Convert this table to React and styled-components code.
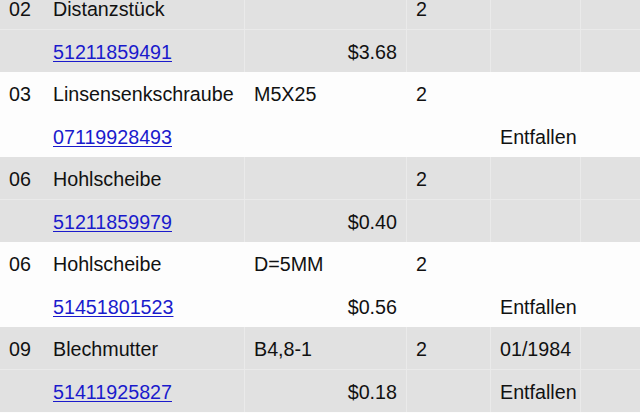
import React from "react";
import styled, { createGlobalStyle } from "styled-components";

const GlobalStyle = createGlobalStyle`
  html, body {
    margin: 0;
    padding: 0;
    background: #fdfdfd;
    overflow: hidden;
  }
  body {
    font-family: "Liberation Sans", Arial, Helvetica, sans-serif;
    color: #111;
  }
`;

const StyledList = styled.div`
  margin-top: -13px;
  width: 640px;
`;

const StyledGroup = styled.div`
  background: ${(p) => (p.$shaded ? "#e1e1e1" : "#fdfdfd")};
  --line: ${(p) => (p.$shaded ? "#eaeaea" : "#fdfdfd")};
`;

const StyledRow = styled.div`
  display: grid;
  grid-template-columns: 44px 201px 162px 84px 90px 59px;
  height: ${(p) => (p.$first ? "43px" : "42px")};
  box-sizing: border-box;
  border-bottom: ${(p) => (p.$first ? "1px solid var(--line)" : "none")};
`;

const StyledCell = styled.div`
  display: flex;
  align-items: center;
  justify-content: ${(p) => (p.$right ? "flex-end" : "flex-start")};
  padding: 3px 9px 0;
  box-sizing: border-box;
  font-size: 19.7px;
  white-space: nowrap;
  border-right: ${(p) => (p.$lined ? "1px solid var(--line)" : "none")};
`;

const StyledLink = styled.a`
  color: #1a1acc;
  text-decoration: underline;
  text-underline-offset: 2px;
`;

const parts = [
  { pos: "02", name: "Distanzstück", spec: "", qty: "2", date: "", nr: "51211859491", price: "$3.68", note: "", shaded: true },
  { pos: "03", name: "Linsensenkschraube", spec: "M5X25", qty: "2", date: "", nr: "07119928493", price: "", note: "Entfallen", shaded: false },
  { pos: "06", name: "Hohlscheibe", spec: "", qty: "2", date: "", nr: "51211859979", price: "$0.40", note: "", shaded: true },
  { pos: "06", name: "Hohlscheibe", spec: "D=5MM", qty: "2", date: "", nr: "51451801523", price: "$0.56", note: "Entfallen", shaded: false },
  { pos: "09", name: "Blechmutter", spec: "B4,8-1", qty: "2", date: "01/1984", nr: "51411925827", price: "$0.18", note: "Entfallen", shaded: true },
];

function PartGroup({ part }) {
  return (
    <StyledGroup $shaded={part.shaded}>
      <StyledRow $first>
        <StyledCell>{part.pos}</StyledCell>
        <StyledCell $lined>{part.name}</StyledCell>
        <StyledCell $lined>{part.spec}</StyledCell>
        <StyledCell $lined>{part.qty}</StyledCell>
        <StyledCell $lined>{part.date}</StyledCell>
        <StyledCell />
      </StyledRow>
      <StyledRow>
        <StyledCell />
        <StyledCell $lined>
          <StyledLink href="#">{part.nr}</StyledLink>
        </StyledCell>
        <StyledCell $lined $right>{part.price}</StyledCell>
        <StyledCell $lined />
        <StyledCell $lined>{part.note}</StyledCell>
        <StyledCell />
      </StyledRow>
    </StyledGroup>
  );
}

export default function App() {
  return (
    <>
      <GlobalStyle />
      <StyledList>
        {parts.map((part, i) => (
          <PartGroup key={i} part={part} />
        ))}
      </StyledList>
    </>
  );
}
